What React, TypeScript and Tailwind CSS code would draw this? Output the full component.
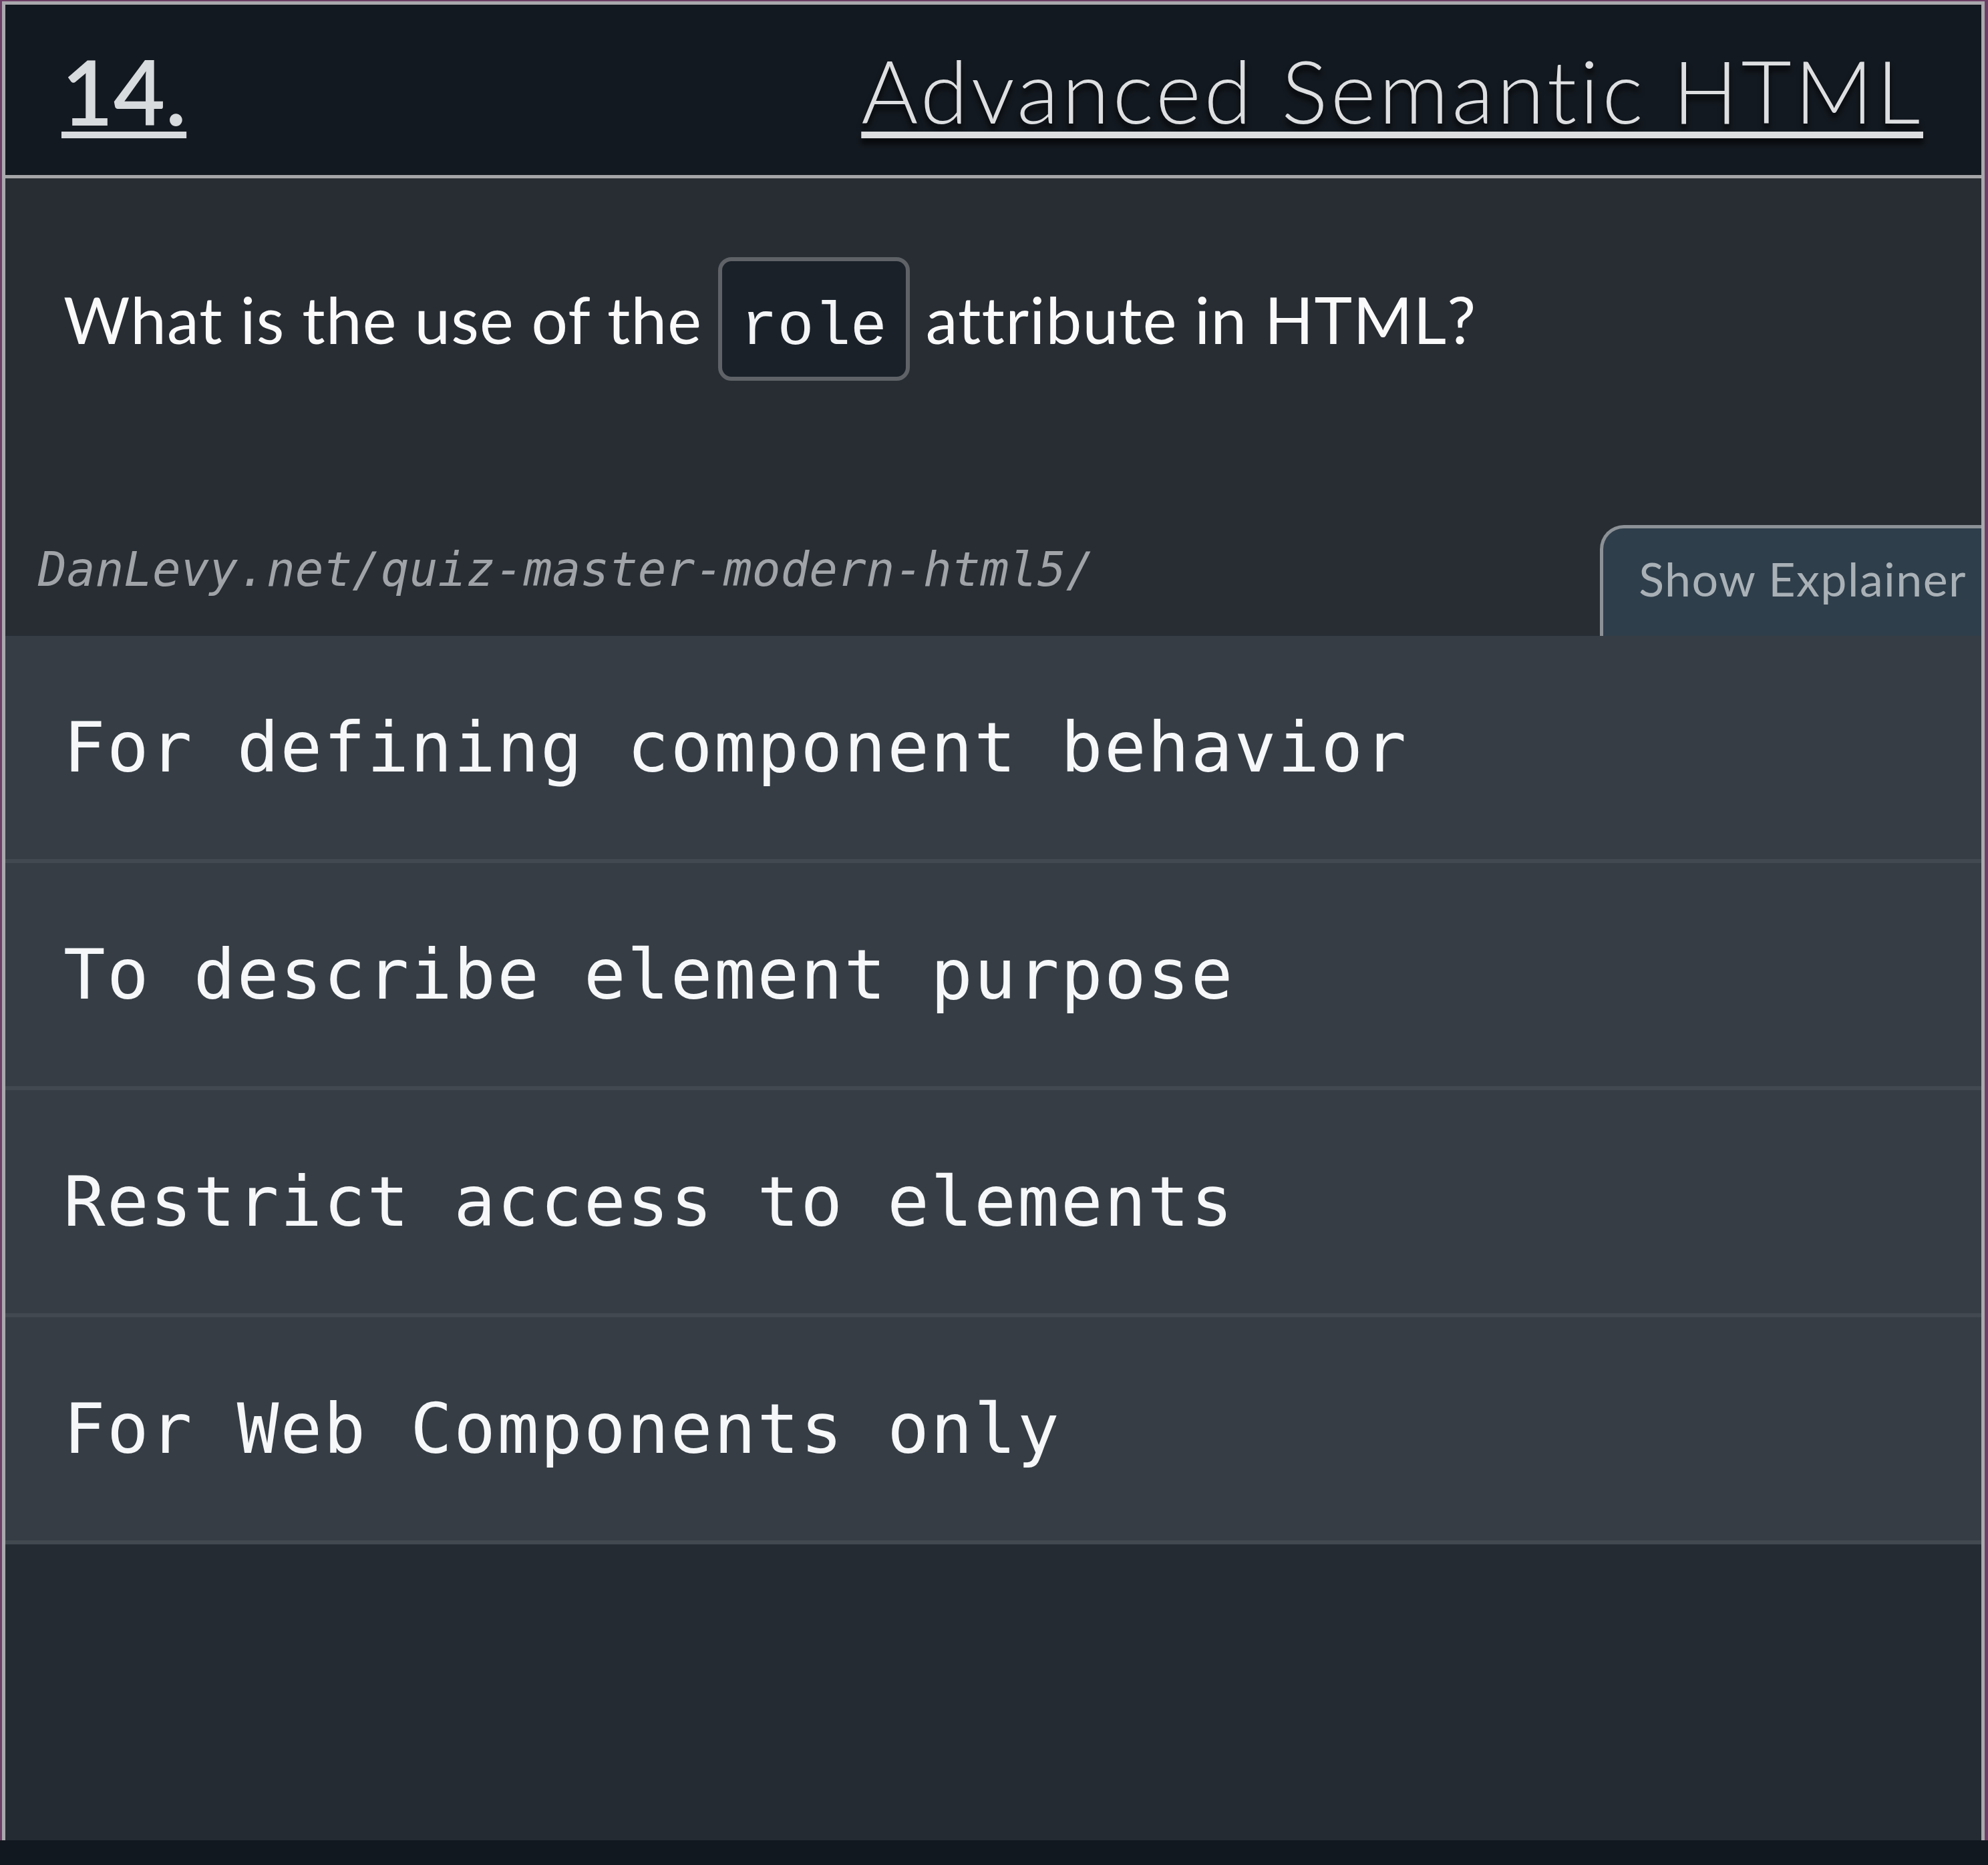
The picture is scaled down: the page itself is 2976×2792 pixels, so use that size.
import React from 'react'

const options = [
  'For defining component behavior',
  'To describe element purpose',
  'Restrict access to elements',
  'For Web Components only',
]

const sans = { fontFamily: 'Lato, "Open Sans", sans-serif' }

// Option row in the answer list
function OptionRow({ label }: { label: string }) {
  return (
    <div className="flex h-[340px] items-center border-b-[6px] border-[#424950] bg-[#363d45] pl-[87px]">
      <span className="font-['DejaVu_Sans_Mono',monospace] text-[104px] leading-none tracking-[2.3px] text-[#f5f7f8]">
        {label}
      </span>
    </div>
  )
}

export default function App() {
  return (
    <div className="flex w-[2976px] flex-col bg-[#121820]">
      <div className="bg-[#6d3f66] pl-[3px] pr-[5px] pt-[2px]">
        <div className="flex flex-col border-x-[5px] border-t-[5px] border-[#a9a9ad] bg-[#252b33]">
          {/* Header */}
          <header className="flex h-[260px] items-center justify-between border-b-[5px] border-[#a5a5a8] bg-[#131920] pl-[84px] pr-[87px]">
            <span
              style={sans}
              className="mt-[4px] text-[134px] font-semibold leading-none text-[#d8dbde] underline decoration-[10px] underline-offset-[9px]"
            >
              14.
            </span>
            <h1
              style={sans}
              className="text-[130px] font-light leading-none tracking-[4.5px] text-[#dcdee0] underline decoration-[10px] underline-offset-[12px] [text-shadow:0_8px_8px_rgba(0,0,0,0.75)]"
            >
              Advanced Semantic HTML
            </h1>
          </header>

          {/* Question */}
          <section className="flex h-[685px] flex-col bg-[#282d34]">
            <div className="flex items-baseline gap-[24px] pl-[87px] pt-[118px] tracking-[1.2px]" style={sans}>
              <span className="text-[96px] leading-none text-[#fafafa]">What is the use of the</span>
              <code className="block rounded-[20px] border-[6px] border-[#5f6368] bg-[#1a2129] px-[28px] pb-[28px] pt-[54px] font-['Liberation_Mono',monospace] text-[91px] leading-none tracking-normal text-[#f3f4f5]">
                role
              </code>
              <span className="text-[96px] leading-none text-[#fafafa]">attribute in HTML?</span>
            </div>

            <div className="mt-auto flex h-[166px] items-start">
              <span className="ml-[49px] mt-[31px] font-['DejaVu_Sans_Mono',monospace] text-[71px] italic leading-none text-[#a0a4a8]">
                DanLevy.net/quiz-master-modern-html5/
              </span>
              <button
                style={sans}
                className="ml-auto flex h-[166px] items-center rounded-tl-[36px] border-l-[5px] border-t-[5px] border-[#8b9196] bg-[#2f3e4b] pb-[12px] pl-[53px] pr-[22px] text-[70px] leading-none tracking-[1.4px] text-[#a9b1b7]"
              >
                Show Explainer
              </button>
            </div>
          </section>

          {/* Answers */}
          <div className="flex flex-col">
            {options.map((o) => (
              <OptionRow key={o} label={o} />
            ))}
          </div>

          <div className="h-[443px] bg-[#252b33]" />
        </div>
      </div>
      <div className="h-[37px] bg-[#121820]" />
    </div>
  )
}
